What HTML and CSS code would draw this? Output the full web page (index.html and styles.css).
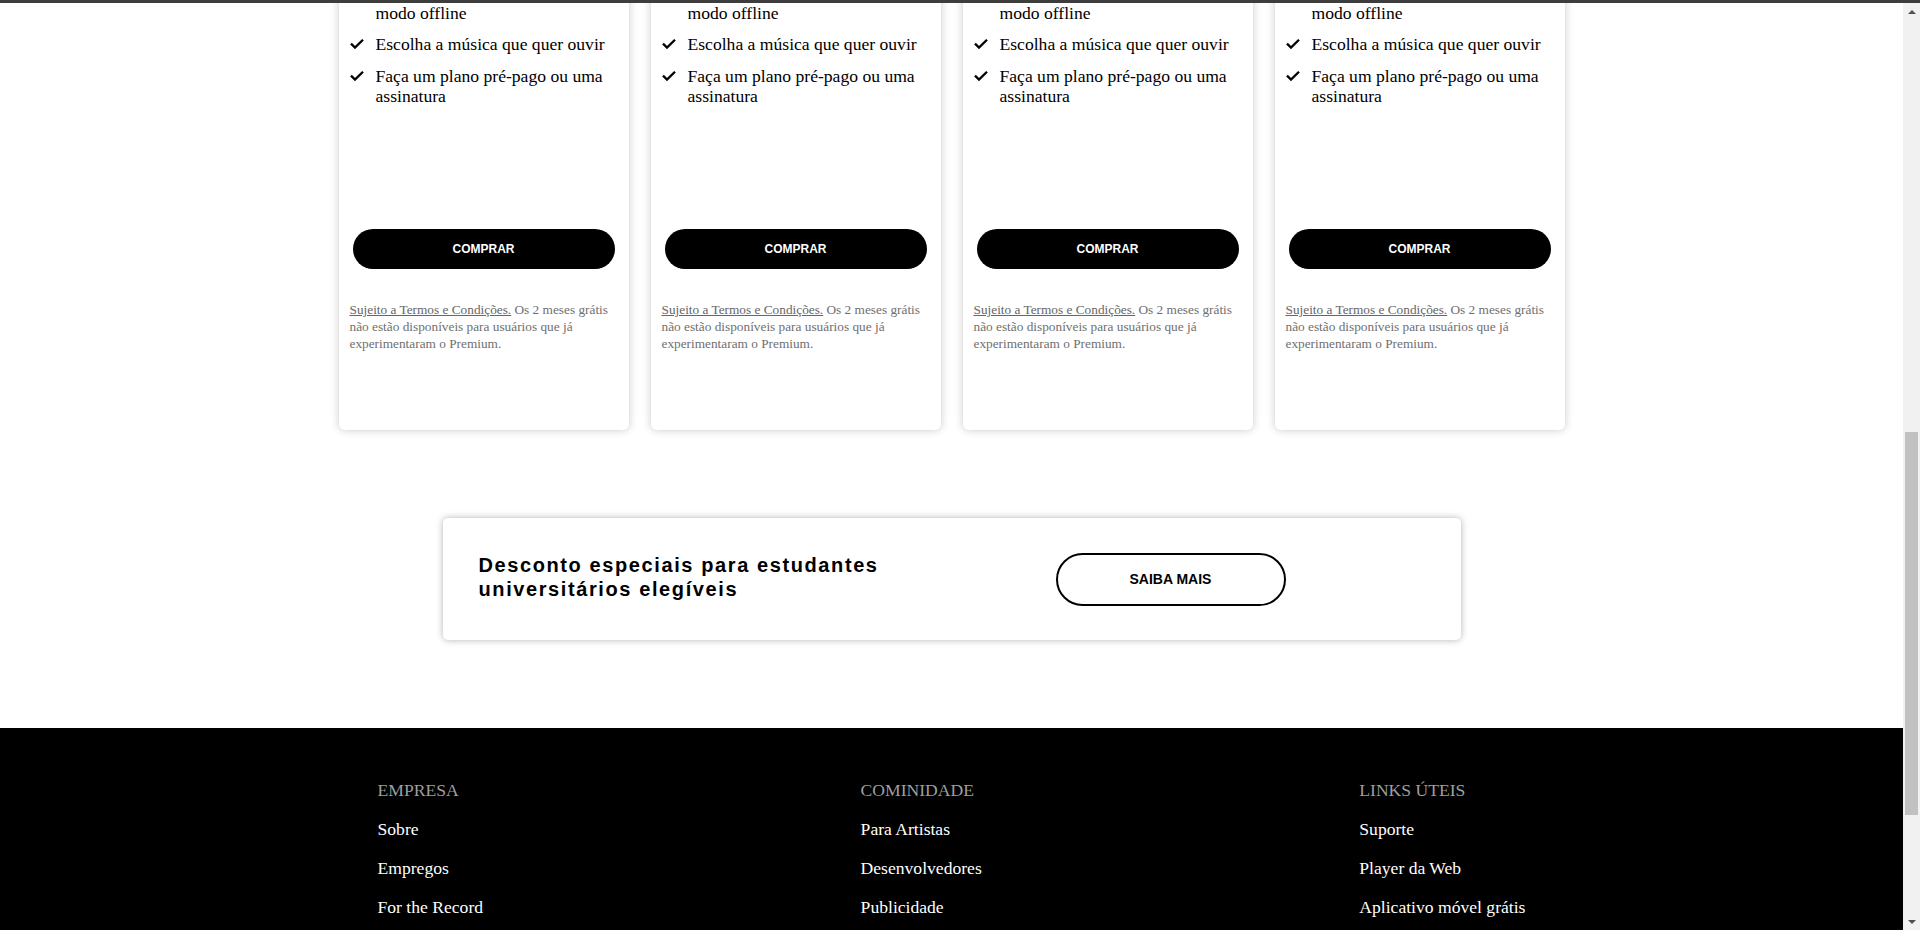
FILE: index.html
```html
<!DOCTYPE html>
<html lang="pt-BR">
<head>
<meta charset="utf-8">
<title>Premium</title>
<link rel="stylesheet" href="styles.css">
</head>
<body>
<div class="topbar"></div>
<div class="window">
  <main class="page">
    <section class="plans">
      <article class="card">
        <ul class="features">
          <li><span class="tick"><svg viewBox="0 0 14 10" width="14" height="10"><path d="M1 4.6 L5 8.6 L13 0.8"/></svg></span><span>Ouça música no<br>modo offline</span></li>
          <li><span class="tick"><svg viewBox="0 0 14 10" width="14" height="10"><path d="M1 4.6 L5 8.6 L13 0.8"/></svg></span><span>Escolha a música que quer ouvir</span></li>
          <li><span class="tick"><svg viewBox="0 0 14 10" width="14" height="10"><path d="M1 4.6 L5 8.6 L13 0.8"/></svg></span><span>Faça um plano pré-pago ou uma assinatura</span></li>
        </ul>
        <button class="buy">COMPRAR</button>
        <p class="terms"><span class="terms-link">Sujeito a Termos e Condições.</span> Os 2 meses grátis não estão disponíveis para usuários que já experimentaram o Premium.</p>
      </article>
      <article class="card">
        <ul class="features">
          <li><span class="tick"><svg viewBox="0 0 14 10" width="14" height="10"><path d="M1 4.6 L5 8.6 L13 0.8"/></svg></span><span>Ouça música no<br>modo offline</span></li>
          <li><span class="tick"><svg viewBox="0 0 14 10" width="14" height="10"><path d="M1 4.6 L5 8.6 L13 0.8"/></svg></span><span>Escolha a música que quer ouvir</span></li>
          <li><span class="tick"><svg viewBox="0 0 14 10" width="14" height="10"><path d="M1 4.6 L5 8.6 L13 0.8"/></svg></span><span>Faça um plano pré-pago ou uma assinatura</span></li>
        </ul>
        <button class="buy">COMPRAR</button>
        <p class="terms"><span class="terms-link">Sujeito a Termos e Condições.</span> Os 2 meses grátis não estão disponíveis para usuários que já experimentaram o Premium.</p>
      </article>
      <article class="card">
        <ul class="features">
          <li><span class="tick"><svg viewBox="0 0 14 10" width="14" height="10"><path d="M1 4.6 L5 8.6 L13 0.8"/></svg></span><span>Ouça música no<br>modo offline</span></li>
          <li><span class="tick"><svg viewBox="0 0 14 10" width="14" height="10"><path d="M1 4.6 L5 8.6 L13 0.8"/></svg></span><span>Escolha a música que quer ouvir</span></li>
          <li><span class="tick"><svg viewBox="0 0 14 10" width="14" height="10"><path d="M1 4.6 L5 8.6 L13 0.8"/></svg></span><span>Faça um plano pré-pago ou uma assinatura</span></li>
        </ul>
        <button class="buy">COMPRAR</button>
        <p class="terms"><span class="terms-link">Sujeito a Termos e Condições.</span> Os 2 meses grátis não estão disponíveis para usuários que já experimentaram o Premium.</p>
      </article>
      <article class="card">
        <ul class="features">
          <li><span class="tick"><svg viewBox="0 0 14 10" width="14" height="10"><path d="M1 4.6 L5 8.6 L13 0.8"/></svg></span><span>Ouça música no<br>modo offline</span></li>
          <li><span class="tick"><svg viewBox="0 0 14 10" width="14" height="10"><path d="M1 4.6 L5 8.6 L13 0.8"/></svg></span><span>Escolha a música que quer ouvir</span></li>
          <li><span class="tick"><svg viewBox="0 0 14 10" width="14" height="10"><path d="M1 4.6 L5 8.6 L13 0.8"/></svg></span><span>Faça um plano pré-pago ou uma assinatura</span></li>
        </ul>
        <button class="buy">COMPRAR</button>
        <p class="terms"><span class="terms-link">Sujeito a Termos e Condições.</span> Os 2 meses grátis não estão disponíveis para usuários que já experimentaram o Premium.</p>
      </article>
    </section>

    <section class="student">
      <h2 class="student-title">Desconto especiais para estudantes universitários elegíveis</h2>
      <button class="more">SAIBA MAIS</button>
    </section>

    <footer class="footer">
      <div class="fcol">
        <h3 class="fhead">EMPRESA</h3>
        <a href="#" class="flink">Sobre</a>
        <a href="#" class="flink">Empregos</a>
        <a href="#" class="flink">For the Record</a>
      </div>
      <div class="fcol">
        <h3 class="fhead">COMINIDADE</h3>
        <a href="#" class="flink">Para Artistas</a>
        <a href="#" class="flink">Desenvolvedores</a>
        <a href="#" class="flink">Publicidade</a>
      </div>
      <div class="fcol">
        <h3 class="fhead">LINKS ÚTEIS</h3>
        <a href="#" class="flink">Suporte</a>
        <a href="#" class="flink">Player da Web</a>
        <a href="#" class="flink">Aplicativo móvel grátis</a>
      </div>
    </footer>
  </main>
  <div class="scrollbar">
    <div class="sb-btn"><span class="arrow-up"></span></div>
    <div class="sb-thumb"></div>
    <div class="sb-btn sb-down"><span class="arrow-down"></span></div>
  </div>
</div>
</body>
</html>
```

FILE: styles.css
```css
* { box-sizing: border-box; }

html, body {
  margin: 0;
  padding: 0;
}

body {
  height: 930px;
  overflow: hidden;
  display: flex;
  flex-direction: column;
  background: #fff;
  font-family: "Liberation Serif", "Times New Roman", serif;
  color: #000;
}

.topbar {
  height: 3px;
  flex: 0 0 3px;
  background: #3d3d3d;
}

.window {
  flex: 1;
  display: flex;
  min-height: 0;
}

.page {
  flex: 1;
  min-width: 0;
  overflow: hidden;
}

/* ---------- plan cards ---------- */
.plans {
  display: flex;
  justify-content: center;
  gap: 22px;
  margin-top: -40px;
}

.card {
  width: 290px;
  background: #fff;
  border-radius: 6px;
  box-shadow: 0 0 8px rgba(0, 0, 0, 0.22);
  padding: 20px 11px 78px;
}

.features {
  list-style: none;
  margin: 0;
  padding: 0;
  display: flex;
  flex-direction: column;
  gap: 11px;
  font-size: 17.6px;
  line-height: 20.2px;
}

.features li {
  display: flex;
  align-items: flex-start;
}

.tick {
  flex: 0 0 26px;
  padding-top: 5px;
  display: flex;
}

.tick svg path {
  fill: none;
  stroke: #000;
  stroke-width: 2.3;
}

.buy {
  display: block;
  width: 262px;
  height: 40px;
  margin: 123px auto 0;
  border: none;
  border-radius: 20px;
  background: #000;
  color: #fff;
  font-family: "Liberation Sans", Arial, sans-serif;
  font-weight: bold;
  font-size: 12px;
  cursor: pointer;
}

.terms {
  margin: 32px 0 0;
  font-size: 13.3px;
  line-height: 17px;
  color: #6f6f6f;
}

.terms-link {
  color: #666;
  text-decoration: underline;
}

/* ---------- student banner ---------- */
.student {
  width: 1018px;
  height: 122px;
  margin: 88px auto 0;
  background: #fff;
  border-radius: 5px;
  box-shadow: 0 0 7px rgba(0, 0, 0, 0.3);
  display: flex;
  align-items: center;
  padding: 0 175px 0 36px;
}

.student-title {
  margin: 0 0 4px;
  width: 430px;
  font-family: "Liberation Sans", Arial, sans-serif;
  font-weight: bold;
  font-size: 20px;
  line-height: 24px;
  letter-spacing: 1.6px;
  color: #000;
}

.more {
  margin-left: auto;
  width: 230px;
  height: 53px;
  border: 2px solid #000;
  border-radius: 27px;
  background: #fff;
  color: #000;
  font-family: "Liberation Sans", Arial, sans-serif;
  font-weight: bold;
  font-size: 14px;
  cursor: pointer;
}

/* ---------- footer ---------- */
.footer {
  margin-top: 88px;
  background: #000;
  min-height: 300px;
  padding-top: 52px;
  display: flex;
  justify-content: space-evenly;
  align-items: flex-start;
}

.fcol {
  display: flex;
  flex-direction: column;
  gap: 18.7px;
  font-size: 17.6px;
  line-height: 20.2px;
}

.fhead {
  margin: 0;
  font-size: 17.6px;
  font-weight: normal;
  color: #9e9e9e;
}

.flink {
  color: #fff;
  text-decoration: none;
}

/* ---------- scrollbar ---------- */
.scrollbar {
  flex: 0 0 17px;
  width: 17px;
  background: #f1f1f1;
  display: flex;
  flex-direction: column;
  align-items: center;
}

.sb-btn {
  height: 17px;
  width: 17px;
  display: flex;
  align-items: center;
  justify-content: center;
}

.sb-down {
  margin-top: auto;
}

.arrow-up {
  width: 0;
  height: 0;
  border-left: 4px solid transparent;
  border-right: 4px solid transparent;
  border-bottom: 4px solid #505050;
}

.arrow-down {
  width: 0;
  height: 0;
  border-left: 4px solid transparent;
  border-right: 4px solid transparent;
  border-top: 4px solid #505050;
}

.sb-thumb {
  width: 13px;
  height: 383px;
  margin-top: 412px;
  background: #c1c1c1;
}
```
